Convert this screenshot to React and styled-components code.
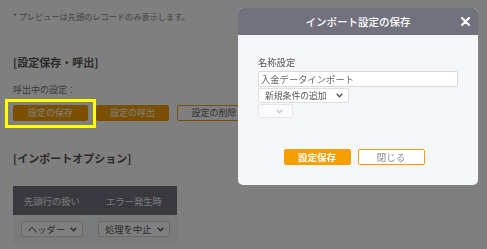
import React from "react";
import styled, { createGlobalStyle } from "styled-components";

const Global = createGlobalStyle`
  html, body { margin: 0; padding: 0; background: #ffffff; }
  body { font-family: "Noto Sans CJK JP", "Noto Sans", sans-serif; overflow: hidden; }
  * { box-sizing: border-box; }
`;

const ORANGE = "#f59f00";

const Page = styled.div`
  padding: 10px 13px;
  display: flex;
  flex-direction: column;
  align-items: flex-start;
`;

const Note = styled.div`
  font-size: 8.2px;
  line-height: 12px;
  color: #8a8a8a;
`;

const SectionTitle = styled.div`
  margin-top: ${(p) => p.$mt}px;
  font-size: 11px;
  line-height: 16px;
  font-weight: 700;
  color: #555;
`;

const Caption = styled.div`
  margin-top: 14px;
  font-size: 9px;
  line-height: 12px;
  color: #777;
`;

const ButtonRow = styled.div`
  margin-top: 9px;
  display: flex;
  gap: 8px;
`;

const PageButton = styled.button`
  width: ${(p) => p.$w}px;
  height: 16px;
  padding: 0;
  border-radius: 2px;
  font-family: inherit;
  font-size: 9px;
  line-height: 14px;
  border: 1px solid ${ORANGE};
  background: ${(p) => (p.$outline ? "#ffffff" : ORANGE)};
  color: ${(p) => (p.$outline ? "#666" : "#ffffff")};
`;

const Highlight = styled.span`
  position: relative;
  display: inline-flex;
  &::after {
    content: "";
    position: absolute;
    top: -6px;
    bottom: -7px;
    left: -8px;
    right: -8px;
    border: 3px solid #ffff00;
    z-index: 30;
    pointer-events: none;
  }
`;

const Table = styled.div`
  margin-top: 20px;
  display: grid;
  grid-template-columns: 78px 86px;
`;

const HeadCell = styled.div`
  height: 29px;
  background: #72727e;
  color: #f4f4f4;
  font-size: 9.3px;
  display: flex;
  align-items: center;
  justify-content: center;
`;

const BodyCell = styled.div`
  height: 29px;
  background: #f5f6fa;
  display: flex;
  align-items: center;
  justify-content: center;
  padding-bottom: 1px;
`;

const SelectBox = styled.div`
  width: ${(p) => p.$w}px;
  height: ${(p) => p.$h || 16}px;
  background: #fff;
  border: 1px solid ${(p) => p.$border || "#d4d4d4"};
  border-radius: 2px;
  display: flex;
  align-items: center;
  justify-content: ${(p) => (p.$empty ? "flex-end" : "space-between")};
  padding: 0 ${(p) => (p.$empty ? 9 : 5)}px 0 ${(p) => p.$pl || 6}px;
  font-size: ${(p) => p.$fs || 9.3}px;
  color: #555;
  white-space: nowrap;
`;

const Chevron = ({ color = "#555" }) => (
  <svg width="7" height="5" viewBox="0 0 7 5" style={{ flex: "none" }}>
    <polyline points="0.7,0.8 3.5,3.8 6.3,0.8" fill="none" stroke={color} strokeWidth="1.4" />
  </svg>
);

const Overlay = styled.div`
  position: fixed;
  inset: 0;
  background: rgba(0, 0, 0, 0.5);
  z-index: 10;
`;

const Modal = styled.div`
  position: fixed;
  left: 238px;
  top: 8px;
  width: 240px;
  border-radius: 5px;
  overflow: hidden;
  z-index: 20;
  background: #f5f6fa;
`;

const ModalHeader = styled.div`
  height: 27px;
  background: #72727e;
  display: flex;
  align-items: center;
  justify-content: center;
  position: relative;
  color: #fff;
  font-size: 10.5px;
  font-weight: 500;
`;

const CloseIcon = styled.span`
  position: absolute;
  right: 8px;
  top: 9px;
  width: 9px;
  height: 9px;
  display: flex;
`;

const ModalBody = styled.div`
  padding: 21px 20px 20px 20px;
  display: flex;
  flex-direction: column;
  align-items: flex-start;
`;

const Label = styled.div`
  font-size: 9.3px;
  line-height: 12px;
  color: #555;
`;

const TextInput = styled.div`
  margin-top: 3px;
  width: 200px;
  height: 16px;
  background: #fff;
  border: 1px solid #d8d8d8;
  border-radius: 2px;
  padding-left: 2px;
  font-size: 9.3px;
  line-height: 14px;
  color: #666;
`;

const Stack = styled.div`
  margin-top: 1px;
  opacity: ${(p) => (p.$faded ? 0.6 : 1)};
`;

const ModalActions = styled.div`
  margin-top: 31px;
  align-self: stretch;
  display: flex;
  justify-content: center;
  gap: 7px;
  padding-right: 8px;
`;

const ModalButton = styled.button`
  width: 67px;
  height: 16px;
  padding: 0;
  border-radius: 2px;
  font-family: inherit;
  font-size: 9.5px;
  line-height: 14px;
  border: 1px solid ${ORANGE};
  background: ${(p) => (p.$primary ? ORANGE : "#ffffff")};
  color: ${(p) => (p.$primary ? "#ffffff" : "#888")};
  font-weight: ${(p) => (p.$primary ? 700 : 400)};
`;

export default function App() {
  return (
    <>
      <Global />
      <Page>
        <Note>* プレビューは先頭のレコードのみ表示します。</Note>
        <SectionTitle $mt={32}>[設定保存・呼出]</SectionTitle>
        <Caption>呼出中の設定：</Caption>
        <ButtonRow>
          <Highlight>
            <PageButton $w={75}>設定の保存</PageButton>
          </Highlight>
          <PageButton $w={73}>設定の呼出</PageButton>
          <PageButton $w={74} $outline>設定の削除</PageButton>
        </ButtonRow>
        <SectionTitle $mt={29}>[インポートオプション]</SectionTitle>
        <Table>
          <HeadCell>先頭行の扱い</HeadCell>
          <HeadCell>エラー発生時</HeadCell>
          <BodyCell>
            <SelectBox $w={62}>
              <span>ヘッダー</span>
              <Chevron />
            </SelectBox>
          </BodyCell>
          <BodyCell>
            <SelectBox $w={72}>
              <span>処理を中止</span>
              <Chevron />
            </SelectBox>
          </BodyCell>
        </Table>
      </Page>
      <Overlay />
      <Modal>
        <ModalHeader>
          インポート設定の保存
          <CloseIcon>
            <svg width="9" height="9" viewBox="0 0 9 9">
              <path d="M1 1 L8 8 M8 1 L1 8" stroke="#fff" strokeWidth="2.2" strokeLinecap="round" />
            </svg>
          </CloseIcon>
        </ModalHeader>
        <ModalBody>
          <Label>名称設定</Label>
          <TextInput>入金データインポート</TextInput>
          <Stack>
            <SelectBox $w={91} $h={15} $pl={6} $fs={8.8} $border="#dedede">
              <span>新規条件の追加</span>
              <Chevron />
            </SelectBox>
          </Stack>
          <Stack $faded>
            <SelectBox $w={35} $h={14} $empty $border="#dedede">
              <Chevron color="#aaa" />
            </SelectBox>
          </Stack>
          <ModalActions>
            <ModalButton $primary>設定保存</ModalButton>
            <ModalButton>閉じる</ModalButton>
          </ModalActions>
        </ModalBody>
      </Modal>
    </>
  );
}
